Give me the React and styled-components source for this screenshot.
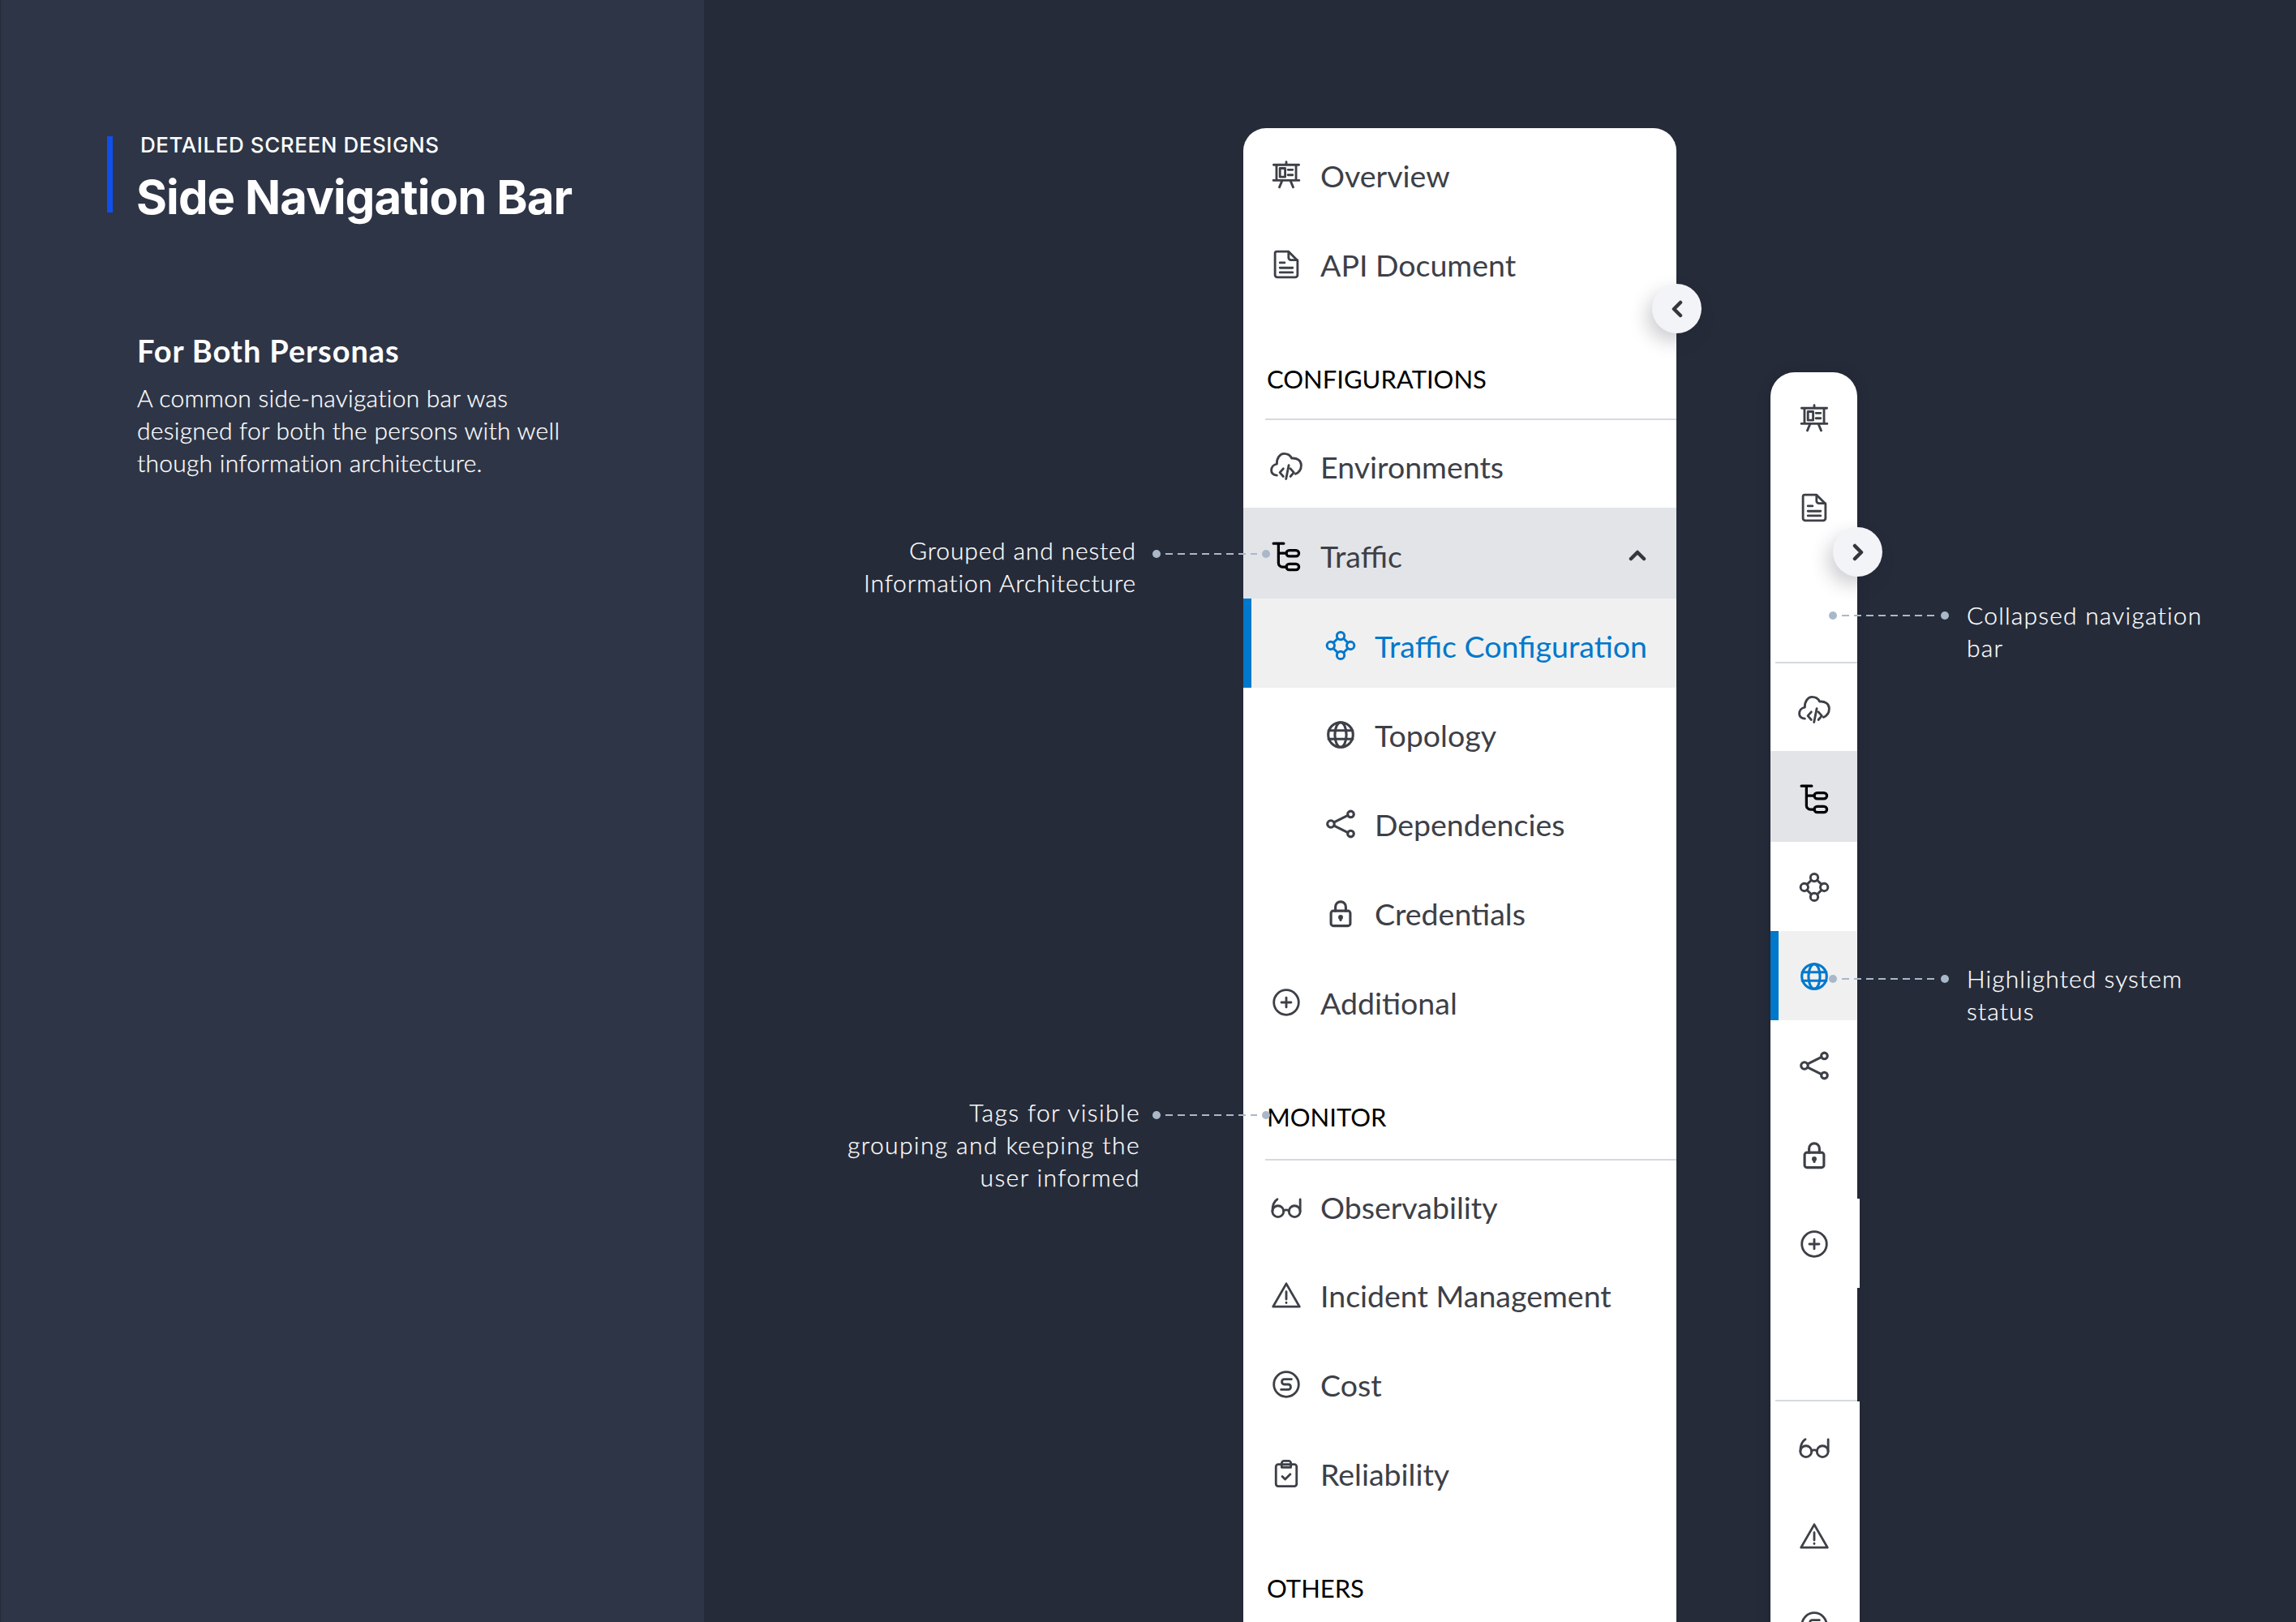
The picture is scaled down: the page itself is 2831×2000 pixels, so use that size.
import React from 'react';
import styled, { createGlobalStyle } from 'styled-components';

const GlobalStyle = createGlobalStyle`
  html, body {
    margin: 0;
    padding: 0;
    background: #252b39;
  }
  * { box-sizing: border-box; }
`;

const Page = styled.div`
  display: flex;
  width: 2831px;
  height: 2000px;
  padding-left: 1px;
  overflow: hidden;
  background: #252b39;
  font-family: Lato, "Open Sans", sans-serif;
`;

const InfoPanel = styled.aside`
  flex: 0 0 867px;
  padding: 168px 0 0 131px;
  background: #2e3546;
  color: #fff;
`;

const TitleBlock = styled.header`
  height: 94px;
  padding-left: 31px;
  border-left: 7px solid #0f4fee;
`;

const Eyebrow = styled.div`
  margin-left: 3px;
  font-family: Inter, sans-serif;
  font-size: 26px;
  line-height: 22px;
  font-weight: 500;
  letter-spacing: 0.56px;
`;

const Title = styled.h1`
  margin: 20px 0 0 -2px;
  font-family: Inter, sans-serif;
  font-size: 58px;
  line-height: 66px;
  font-weight: 700;
  letter-spacing: -0.9px;
`;

const Persona = styled.section`
  margin: 148px 0 0 37px;
`;

const PersonaTitle = styled.h2`
  margin: 0;
  font-size: 38px;
  line-height: 44px;
  font-weight: 700;
  letter-spacing: 0.9px;
`;

const PersonaText = styled.p`
  margin: 16px 0 0;
  font-size: 30px;
  line-height: 40px;
  font-weight: 300;
  letter-spacing: 0.26px;
  -webkit-text-stroke: 0.25px #fff;
`;

const Stage = styled.main`
  position: relative;
  flex: 1;
  display: flex;
  align-items: flex-start;
  gap: 116px;
  padding: 158px 0 0 665px;
`;

const NavCard = styled.nav`
  position: relative;
  flex: 0 0 534px;
  background: #fff;
  border-radius: 28px 28px 0 0;
`;

const NavRow = styled.div`
  display: flex;
  align-items: center;
  gap: 25px;
  height: ${(p) => p.$height || 110}px;
  padding: 6px 0 0 ${(p) => (p.$sub ? 103 : 36)}px;
  font-size: 37.5px;
  color: ${(p) => (p.$active ? '#0078cc' : '#3d4047')};
  background: ${(p) => (p.$open ? '#e2e4e8' : p.$active ? '#f0f0f0' : 'transparent')};
  box-shadow: ${(p) => (p.$active ? 'inset 10px 0 0 #0078cc' : 'none')};
`;

const Glyph = styled.svg`
  flex: 0 0 34px;
  width: 34px;
  height: 34px;
  overflow: visible;
  fill: none;
  stroke: currentColor;
  stroke-width: ${(p) => p.$weight || 2};
  stroke-linecap: round;
  stroke-linejoin: round;
  color: ${(p) => p.$tint || 'currentColor'};
`;

const RowChevron = styled.svg`
  margin-left: auto;
  margin-right: 37px;
  width: 22px;
  height: 14px;
  fill: none;
  stroke: #34363c;
  stroke-width: 4.5;
  stroke-linecap: round;
  stroke-linejoin: round;
`;

const SectionHead = styled.div`
  display: flex;
  flex-direction: column;
  height: ${(p) => p.$height || 140}px;
  padding-top: 71px;
`;

const SectionLabel = styled.div`
  flex: 1;
  padding-left: 29px;
  font-size: 31px;
  line-height: 36px;
  color: #000;
`;

const Rule = styled.div`
  height: 2px;
  margin-left: ${(p) => p.$inset}px;
  background: #d5d9df;
`;

const Toggle = styled.button`
  position: absolute;
  display: flex;
  align-items: center;
  justify-content: center;
  top: ${(p) => p.$top}px;
  right: -31px;
  width: 61px;
  height: 61px;
  padding: 0;
  border: 0;
  border-radius: 50%;
  background: #f3f4f8;
  box-shadow: -6px 10px 22px rgba(30, 35, 50, 0.22);
`;

const ToggleChevron = styled.svg`
  width: 14px;
  height: 22px;
  fill: none;
  stroke: #34363c;
  stroke-width: 4.5;
  stroke-linecap: round;
  stroke-linejoin: round;
`;

const Rail = styled.nav`
  position: relative;
  flex: 0 0 107px;
  margin-top: 301px;
  padding-top: 1px;
  background: #fff;
  border-radius: 30px 30px 0 0;
  box-shadow: 0 0 18px rgba(0, 0, 0, 0.12);
`;

const RailRow = styled.div`
  display: flex;
  align-items: center;
  justify-content: center;
  height: ${(p) => p.$height || 110}px;
  padding-top: ${(p) => p.$nudge ?? 2}px;
  margin-right: ${(p) => (p.$wide ? -3 : 0)}px;
  padding-right: ${(p) => (p.$wide ? 3 : 0)}px;
  color: ${(p) => (p.$active ? '#0078cc' : '#3d4047')};
  background: ${(p) => (p.$open ? '#e2e4e8' : p.$active ? '#f0f0f0' : p.$wide ? '#fff' : 'transparent')};
  box-shadow: ${(p) => (p.$active ? 'inset 10px 0 0 #0078cc' : 'none')};
`;

const RailGap = styled.div`
  height: ${(p) => p.$height}px;
`;

const Callout = styled.div`
  position: absolute;
  top: ${(p) => p.$top}px;
  left: ${(p) => p.$left}px;
  width: ${(p) => p.$width}px;
  font-size: 30px;
  line-height: 40px;
  font-weight: 300;
  color: #fff;
  text-align: ${(p) => p.$align || 'left'};
  letter-spacing: ${(p) => p.$track}px;
  -webkit-text-stroke: 0.25px #fff;
`;

const Leader = styled.div`
  position: absolute;
  top: ${(p) => p.$top}px;
  left: ${(p) => p.$left}px;
  display: flex;
  align-items: center;
  width: ${(p) => p.$width}px;
  height: 10px;
`;

const LeaderDot = styled.span`
  flex: 0 0 10px;
  height: 10px;
  border-radius: 50%;
  background: #a9b8c9;
`;

const LeaderDash = styled.span`
  flex: 1;
  height: 2px;
  margin: 0 6px;
  background: repeating-linear-gradient(90deg, #a9b8c9 0 9px, transparent 9px 15px);
`;

const IconOverview = () => (
  <Glyph viewBox="0 0 24 24">
    <path d="M12 .5v2.500M1 3h22M3.500 3v13.500h17V3M.8 16.500h22.400M8.500 16.500 6 22.500M15.500 16.500l2.500 6" />
    <rect x="6.500" y="6" width="4.500" height="7.500" />
    <path d="M13.500 7.300h4M13.500 11.800h4" />
  </Glyph>
);

const IconDoc = () => (
  <Glyph viewBox="0 0 24 24">
    <path d="M3.700.8h10.300l7.800 7.800v12.600a2 2 0 0 1-2 2H4.200a2 2 0 0 1-2-2V2.300A1.500 1.500 0 0 1 3.700.8Z" />
    <path d="M14 1v5.200a2 2 0 0 0 2 2h5.500M6.500 10.500h4M6.500 15h11M6.500 19h11" />
  </Glyph>
);

const IconCloud = () => (
  <Glyph viewBox="0 0 24 24">
    <path d="M3.800 19.800C1 19.500-1 18-1 15.500-1 13 .8 10.500 3.800 10 3.500 5 6.500 1 10 1c3 0 5.500 1.500 6.700 4 4.500-.5 8.300 2 8.300 6 0 3.500-2 6.500-5 7.600" />
    <path d="m9.400 14-3 3.400 3 3.400M15.600 14l3 3.400-3 3.400M14.200 11 11.800 23" />
  </Glyph>
);

const IconTree = () => (
  <Glyph viewBox="0 0 24 24" $weight={2.300} $tint="#000">
    <path d="M.8 1.500h9M5.200 1.500V18.500a3.500 3.500 0 0 0 3.500 3.500H12M5.200 10h6.800" />
    <rect x="12" y="7.500" width="11" height="5.200" rx="2.600" />
    <rect x="12" y="19.300" width="11" height="5.200" rx="2.600" />
  </Glyph>
);

const IconNodes = () => (
  <Glyph viewBox="0 0 24 24" $weight={2.100}>
    <circle cx="12" cy="3.600" r="3.300" />
    <circle cx="3.400" cy="12" r="3.300" />
    <circle cx="20.600" cy="12" r="3.300" />
    <circle cx="12" cy="20.400" r="3.300" />
    <path d="M9.500 5.800 5.600 9.600M14.500 5.800l3.900 3.800M9.500 18.200l-3.900-3.800M14.500 18.200l3.900-3.800" />
  </Glyph>
);

const IconGlobe = () => (
  <Glyph viewBox="0 0 24 24" $weight={2.200}>
    <circle cx="12" cy="12" r="10.800" />
    <ellipse cx="12" cy="12" rx="5" ry="10.800" />
    <path d="M1.500 8.300h21M1.500 15.700h21" />
  </Glyph>
);

const IconShare = () => (
  <Glyph viewBox="0 0 24 24" $weight={2.200}>
    <circle cx="3.500" cy="12" r="3" />
    <circle cx="20.800" cy="3.500" r="2.700" />
    <circle cx="20.800" cy="20.500" r="2.700" />
    <path d="m6.300 10.500 12-6M6.300 13.500l12 6" />
  </Glyph>
);

const IconLock = () => (
  <Glyph viewBox="0 0 24 24" $weight={2.200}>
    <rect x="3.600" y="10" width="16.800" height="13" rx="2" />
    <path d="M7.500 10V6.500a4.500 4.500 0 0 1 9 0V10M12 15.500V18" />
    <circle cx="12" cy="15.500" r="1" fill="currentColor" />
  </Glyph>
);

const IconPlus = () => (
  <Glyph viewBox="0 0 24 24">
    <circle cx="12" cy="12" r="10.800" />
    <path d="M12 7.800v8.400M7.800 12h8.400" />
  </Glyph>
);

const IconGlasses = () => (
  <Glyph viewBox="0 0 24 24">
    <circle cx="4.800" cy="16" r="4.900" />
    <circle cx="19.200" cy="16" r="4.900" />
    <path d="M9.700 15.500q2.300-1.500 4.600 0M-.1 16C-.1 11 1 7.500 4.200 5.500M24.100 16V5.500" />
  </Glyph>
);

const IconWarning = () => (
  <Glyph viewBox="0 0 24 24">
    <path d="M12 2 23.500 22H.5Z" />
    <path d="M12 9v6.500M12 18.500v.2" />
  </Glyph>
);

const IconDollar = () => (
  <Glyph viewBox="0 0 24 24">
    <circle cx="12" cy="12" r="10.800" />
    <path d="M16.500 7.500H10a2.300 2.300 0 0 0 0 4.500h4a2.300 2.300 0 0 1 0 4.500H7.500" />
  </Glyph>
);

const IconClipboard = () => (
  <Glyph viewBox="0 0 24 24">
    <rect x="3" y="4" width="18" height="19" rx="2" />
    <path d="M8 6.500V3a2 2 0 0 1 2-2h4a2 2 0 0 1 2 2v3.500H8Z" />
    <path d="m8.500 14.500 2.500 2.500 4.500-4.500" />
  </Glyph>
);

const ChevronUp = () => (
  <RowChevron viewBox="0 0 22 14">
    <path d="m3 11 8-8 8 8" />
  </RowChevron>
);

const ChevronLeft = () => (
  <ToggleChevron viewBox="0 0 14 22">
    <path d="M11 3 3 11l8 8" />
  </ToggleChevron>
);

const ChevronRight = () => (
  <ToggleChevron viewBox="0 0 14 22">
    <path d="m3 3 8 8-8 8" />
  </ToggleChevron>
);

const App = () => (
  <>
    <GlobalStyle />
    <Page>
      <InfoPanel>
        <TitleBlock>
          <Eyebrow>DETAILED SCREEN DESIGNS</Eyebrow>
          <Title>Side Navigation Bar</Title>
        </TitleBlock>
        <Persona>
          <PersonaTitle>For Both Personas</PersonaTitle>
          <PersonaText>
            A common side-navigation bar was
            <br />
            designed for both the persons with well
            <br />
            though information architecture.
          </PersonaText>
        </Persona>
      </InfoPanel>

      <Stage>
        <NavCard>
          <NavRow><IconOverview />Overview</NavRow>
          <NavRow><IconDoc />API Document</NavRow>
          <Toggle $top={192}><ChevronLeft /></Toggle>

          <SectionHead>
            <SectionLabel>CONFIGURATIONS</SectionLabel>
            <Rule $inset={27} />
          </SectionHead>
          <NavRow $height={108}><IconCloud />Environments</NavRow>
          <NavRow $height={112} $open><IconTree />Traffic<ChevronUp /></NavRow>
          <NavRow $sub $active><IconNodes />Traffic Configuration</NavRow>
          <NavRow $sub><IconGlobe />Topology</NavRow>
          <NavRow $sub><IconShare />Dependencies</NavRow>
          <NavRow $sub><IconLock />Credentials</NavRow>
          <NavRow><IconPlus />Additional</NavRow>

          <SectionHead $height={143}>
            <SectionLabel>MONITOR</SectionLabel>
            <Rule $inset={27} />
          </SectionHead>
          <NavRow $height={108}><IconGlasses />Observability</NavRow>
          <NavRow><IconWarning />Incident Management</NavRow>
          <NavRow><IconDollar />Cost</NavRow>
          <NavRow><IconClipboard />Reliability</NavRow>

          <SectionHead>
            <SectionLabel>OTHERS</SectionLabel>
          </SectionHead>
        </NavCard>

        <Rail>
          <RailRow><IconOverview /></RailRow>
          <RailRow><IconDoc /></RailRow>
          <Toggle $top={191}><ChevronRight /></Toggle>
          <RailGap $height={136} />
          <Rule $inset={6} />
          <RailRow $height={108} $nudge={6}><IconCloud /></RailRow>
          <RailRow $height={112} $nudge={4} $open><IconTree /></RailRow>
          <RailRow><IconNodes /></RailRow>
          <RailRow $active><IconGlobe /></RailRow>
          <RailRow><IconShare /></RailRow>
          <RailRow><IconLock /></RailRow>
          <RailRow $wide><IconPlus /></RailRow>
          <RailGap $height={138} />
          <Rule $inset={6} />
          <RailRow $wide><IconGlasses /></RailRow>
          <RailRow $wide><IconWarning /></RailRow>
          <RailRow $wide><IconDollar /></RailRow>
        </Rail>

        <Callout $top={658} $left={133} $width={400} $align="right" $track={0.85}>
          Grouped and nested
          <br />
          Information Architecture
        </Callout>
        <Leader $top={678} $left={553} $width={145}>
          <LeaderDot /><LeaderDash /><LeaderDot />
        </Leader>

        <Callout $top={1351} $left={105} $width={433} $align="right" $track={1.4}>
          Tags for visible
          <br />
          grouping and keeping the
          <br />
          user informed
        </Callout>
        <Leader $top={1370} $left={553} $width={145}>
          <LeaderDot /><LeaderDash /><LeaderDot />
        </Leader>

        <Callout $top={738} $left={1557} $width={340} $track={1.2}>
          Collapsed navigation
          <br />
          bar
        </Callout>
        <Leader $top={754} $left={1387} $width={148}>
          <LeaderDot /><LeaderDash /><LeaderDot />
        </Leader>

        <Callout $top={1186} $left={1557} $width={340} $track={1.1}>
          Highlighted system
          <br />
          status
        </Callout>
        <Leader $top={1202} $left={1387} $width={148}>
          <LeaderDot /><LeaderDash /><LeaderDot />
        </Leader>
      </Stage>
    </Page>
  </>
);

export default App;
